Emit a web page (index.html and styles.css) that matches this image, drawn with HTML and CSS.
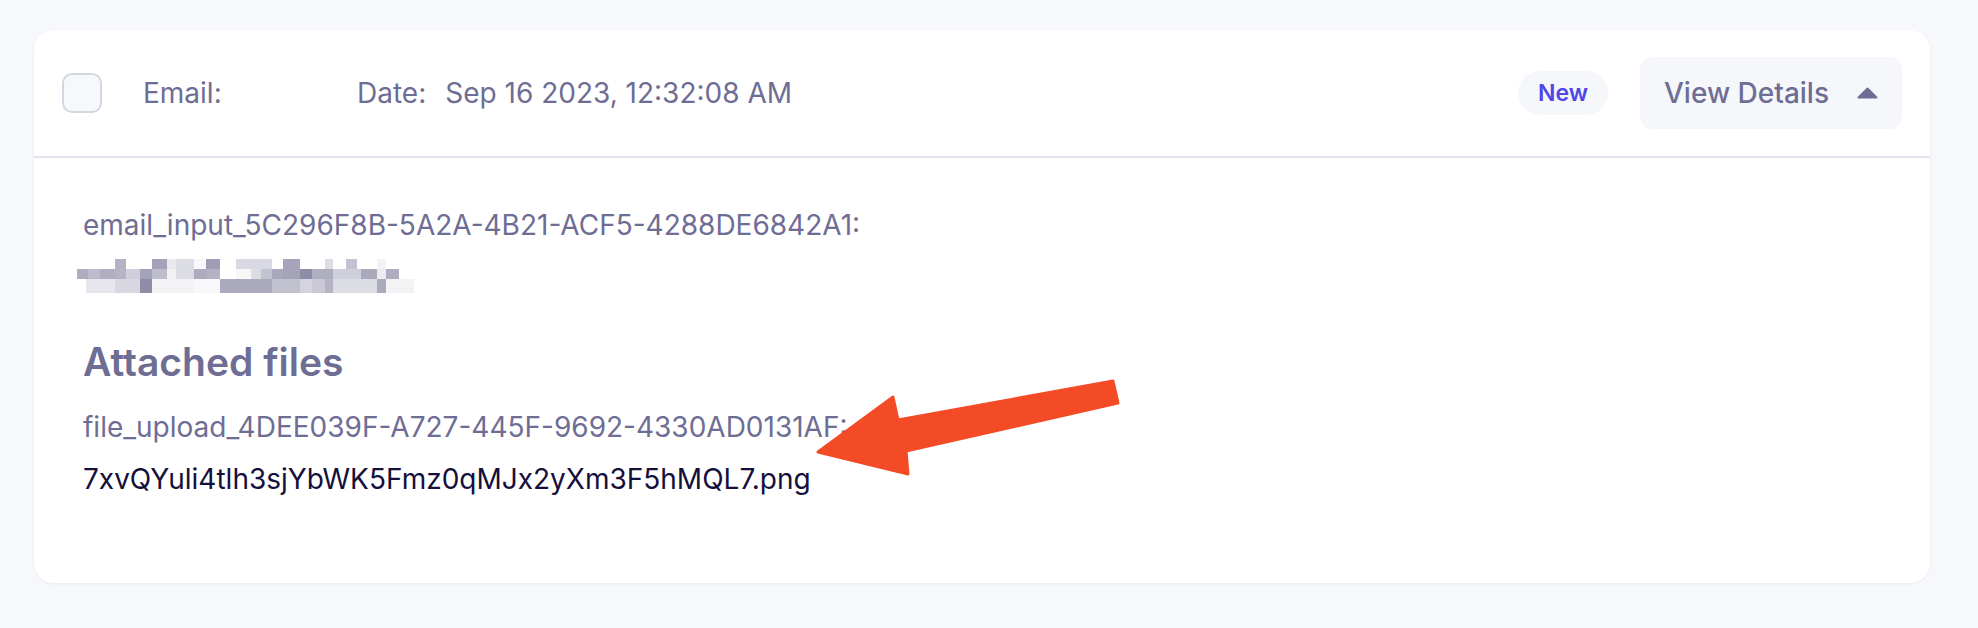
FILE: index.html
```html
<!DOCTYPE html>
<html lang="en">
<head>
<meta charset="utf-8">
<title>Submission</title>
<link rel="stylesheet" href="styles.css">
</head>
<body>
<div class="card">
  <div class="card-header">
    <div class="header-left">
      <span class="checkbox"></span>
      <span class="meta meta-email">Email:</span>
      <span class="meta meta-date"><span>Date:</span><span>Sep 16 2023, 12:32:08 AM</span></span>
    </div>
    <div class="header-right">
      <span class="badge">New</span>
      <button class="details-btn" type="button">
        <span>View Details</span>
        <svg class="caret" width="21" height="12" viewBox="0 0 21 12"><path d="M10.5 1.5 L19.5 10.5 L1.5 10.5 Z" fill="#6e6d94" stroke="#6e6d94" stroke-width="2" stroke-linejoin="round"/></svg>
      </button>
    </div>
  </div>
  <div class="card-body">
    <div class="field">
      <div class="field-label">email_input_5C296F8B-5A2A-4B21-ACF5-4288DE6842A1:</div>
      <svg class="redacted" width="337" height="34" viewBox="50 27 1010 103" preserveAspectRatio="none" shape-rendering="crispEdges">
        <g>
          <rect x="165" y="27" width="32" height="31" fill="#b4b3c5"/>
          <rect x="275" y="27" width="45" height="31" fill="#a3a2b8"/>
          <rect x="320" y="27" width="28" height="31" fill="#e8e8ef"/>
          <rect x="348" y="27" width="52" height="31" fill="#dcdce4"/>
          <rect x="400" y="27" width="38" height="31" fill="#f8f8fa"/>
          <rect x="438" y="27" width="40" height="31" fill="#9f9db3"/>
          <rect x="527" y="27" width="108" height="31" fill="#d9d9e3"/>
          <rect x="668" y="27" width="50" height="31" fill="#a5a4b8"/>
          <rect x="792" y="27" width="26" height="31" fill="#dcdce4"/>
          <rect x="855" y="27" width="33" height="31" fill="#c3c2d0"/>
          <rect x="948" y="27" width="27" height="31" fill="#f3f3f5"/>
        </g>
        <g>
          <rect x="50" y="58" width="33" height="30" fill="#aeadc0"/>
          <rect x="83" y="58" width="37" height="30" fill="#bdbcca"/>
          <rect x="120" y="58" width="45" height="30" fill="#b0afc2"/>
          <rect x="165" y="58" width="32" height="30" fill="#b5b4c5"/>
          <rect x="197" y="58" width="43" height="30" fill="#cfcedb"/>
          <rect x="240" y="58" width="35" height="30" fill="#a3a2b8"/>
          <rect x="275" y="58" width="45" height="30" fill="#bebdcc"/>
          <rect x="320" y="58" width="28" height="30" fill="#f1f1f4"/>
          <rect x="348" y="58" width="52" height="30" fill="#dcdce4"/>
          <rect x="400" y="58" width="38" height="30" fill="#adacbf"/>
          <rect x="438" y="58" width="40" height="30" fill="#b3b2c4"/>
          <rect x="527" y="58" width="43" height="30" fill="#f7f7f8"/>
          <rect x="570" y="58" width="30" height="30" fill="#dcdce4"/>
          <rect x="600" y="58" width="35" height="30" fill="#c3c2d0"/>
          <rect x="635" y="58" width="33" height="30" fill="#a9a8bc"/>
          <rect x="668" y="58" width="50" height="30" fill="#a5a4b8"/>
          <rect x="718" y="58" width="37" height="30" fill="#8e8ca6"/>
          <rect x="755" y="58" width="63" height="30" fill="#b0afc2"/>
          <rect x="818" y="58" width="82" height="30" fill="#cfcedb"/>
          <rect x="900" y="58" width="48" height="30" fill="#aaa9bc"/>
          <rect x="948" y="58" width="27" height="30" fill="#ebebf0"/>
          <rect x="975" y="58" width="40" height="30" fill="#aeadc0"/>
        </g>
        <g>
          <rect x="78" y="88" width="87" height="42" fill="#e6e6ec"/>
          <rect x="165" y="88" width="75" height="42" fill="#d8d7e1"/>
          <rect x="240" y="88" width="35" height="42" fill="#8e8ca6"/>
          <rect x="275" y="88" width="125" height="42" fill="#f3f3f5"/>
          <rect x="400" y="88" width="78" height="42" fill="#f8f8fa"/>
          <rect x="478" y="88" width="157" height="42" fill="#aba9bd"/>
          <rect x="635" y="88" width="83" height="42" fill="#c2c1cf"/>
          <rect x="718" y="88" width="37" height="42" fill="#d4d4de"/>
          <rect x="755" y="88" width="37" height="42" fill="#cac9d5"/>
          <rect x="792" y="88" width="26" height="42" fill="#b5b4c5"/>
          <rect x="818" y="88" width="130" height="42" fill="#dcdce4"/>
          <rect x="948" y="88" width="27" height="42" fill="#aba9bd"/>
          <rect x="975" y="88" width="85" height="42" fill="#f3f3f5"/>
        </g>
      </svg>
    </div>
    <h2 class="section-title">Attached files</h2>
    <div class="field">
      <div class="field-label">file_upload_4DEE039F-A727-445F-9692-4330AD0131AF:</div>
      <div class="field-value">7xvQYuli4tlh3sjYbWK5Fmz0qMJx2yXm3F5hMQL7.png</div>
    </div>
  </div>
</div>
<svg class="annotation-arrow" width="330" height="120" viewBox="0 0 330 120">
  <path d="M18 82 L93 27 L98 50 L313 11 L318 33 L106 81 L108 104 Z" fill="#f44b27" stroke="#f44b27" stroke-width="3" stroke-linejoin="round"/>
</svg>
</body>
</html>
```

FILE: styles.css
```css
* { box-sizing: border-box; }

html, body {
  margin: 0;
  padding: 0;
}

body {
  background: #f7f8fc;
  font-family: "Inter", "Noto Sans", sans-serif;
  color: #6e6d94;
  padding: 30px 48px 45px 34px;
  position: relative;
  min-height: 628px;
}

.card {
  background: #ffffff;
  border-radius: 20px;
  box-shadow: 0 1px 3px rgba(30, 30, 80, 0.06);
  width: 1896px;
}

.card-header {
  height: 128px;
  display: flex;
  align-items: center;
  justify-content: space-between;
  padding: 0 28px;
  border-bottom: 2px solid #e2e4ef;
}

.header-left {
  display: flex;
  align-items: center;
  gap: 40px;
}

.checkbox {
  width: 40px;
  height: 40px;
  border: 2px solid #d4d7e1;
  border-radius: 10px;
  background: #f7f8fc;
  margin-right: 1px;
}

.meta {
  font-size: 28px;
  line-height: 34px;
  color: #6e6d94;
}

.meta-email {
  width: 174px;
}

.meta-date {
  display: flex;
  gap: 19px;
}

.header-right {
  display: flex;
  align-items: center;
  gap: 32px;
}

.badge {
  height: 44px;
  padding: 0 20px;
  border-radius: 22px;
  background: #f6f7fb;
  color: #5046e6;
  font-size: 23px;
  font-weight: 600;
  line-height: 44px;
}

.details-btn {
  height: 72px;
  display: flex;
  align-items: center;
  gap: 28px;
  padding: 0 24px;
  border: none;
  border-radius: 12px;
  background: #f6f7fb;
  font-family: "Inter", "Noto Sans", sans-serif;
  font-size: 28px;
  font-weight: 500;
  color: #6e6d94;
}

.caret {
  display: block;
}

.card-body {
  padding: 50px 48px 87px 49px;
}

.field-label {
  font-size: 28px;
  line-height: 34px;
  color: #6e6d94;
}

.redacted {
  display: block;
  margin-top: 17px;
  margin-left: -6px;
}

.section-title {
  margin: 45px 0 24px;
  font-size: 39px;
  line-height: 48px;
  font-weight: 600;
  color: #6e6d94;
}

.field-value {
  margin-top: 18px;
  font-size: 28px;
  line-height: 34px;
  color: #150f3b;
}

.annotation-arrow {
  position: absolute;
  left: 800px;
  top: 370px;
}
```
